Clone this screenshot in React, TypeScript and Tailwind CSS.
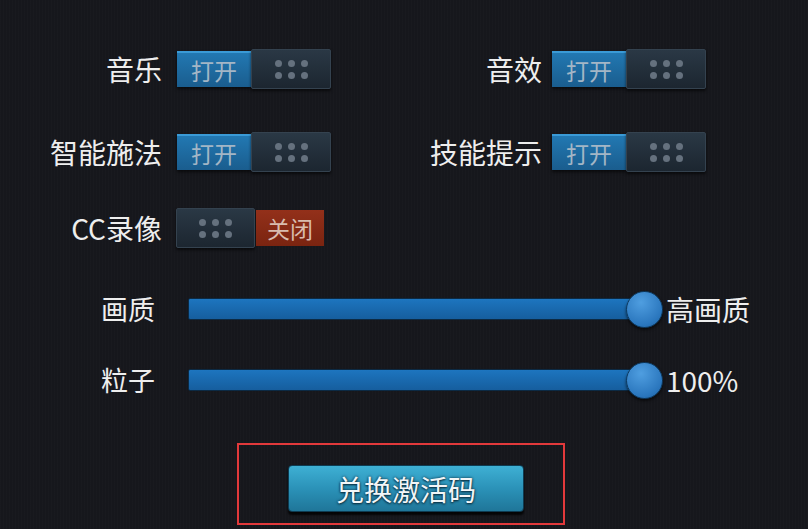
import React from "react";

const font = { fontFamily: '"Noto Sans CJK SC", "Noto Sans", sans-serif' };

function Dots() {
  return (
    <div className="grid grid-cols-3 gap-x-[6px] gap-y-[5px]">
      {[0, 1, 2, 3, 4, 5].map((i) => (
        <span key={i} className="block h-[7px] w-[7px] rounded-full bg-[#65717e]" />
      ))}
    </div>
  );
}

function Toggle({ on }: { on: boolean }) {
  if (on) {
    return (
      <div className="flex items-center">
        <div className="flex h-[36px] w-[74px] items-center justify-center border-t-2 border-[#3a9ad6] bg-gradient-to-b from-[#2278b2] to-[#1a5d8e] text-[23px] text-[#a3b6c6] shadow-[0_2px_3px_rgba(0,0,0,0.6)]">
          打开
        </div>
        <div className="flex h-[40px] w-[80px] items-center justify-center rounded-[2px] border border-[#34424f] bg-gradient-to-b from-[#2a3845] to-[#1c2630] shadow-[0_2px_3px_rgba(0,0,0,0.6)]">
          <Dots />
        </div>
      </div>
    );
  }
  return (
    <div className="flex items-center">
      <div className="flex h-[40px] w-[79px] items-center justify-center rounded-[2px] border border-[#34424f] bg-gradient-to-b from-[#2a3845] to-[#1c2630] shadow-[0_2px_3px_rgba(0,0,0,0.6)]">
        <Dots />
      </div>
      <div className="ml-px flex h-[36px] w-[68px] items-center justify-center bg-gradient-to-b from-[#93301a] to-[#7a2410] text-[23px] text-[#d9bcae]">
        关闭
      </div>
    </div>
  );
}

function Slider({ label, value }: { label: string; value: string }) {
  return (
    <div className="flex h-[40px] items-center">
      <div className="w-[155px] text-right text-[27px] text-[#eeeeee]">{label}</div>
      <div className="ml-[33px] flex items-center">
        <div className="h-[22px] w-[457px] rounded-[2px] border border-[#0c2a44] bg-gradient-to-b from-[#1d75bf] to-[#165e9e]" />
        <div className="-ml-[19px] h-[37px] w-[37px] rounded-full border border-[#0d3a60] bg-[radial-gradient(circle_at_40%_30%,#4f9ee0,#2a76bd_70%,#1d5c97)] shadow-[0_2px_3px_rgba(0,0,0,0.6)]" />
        <div className="ml-[3px] text-[28px] text-[#eeeeee]">{value}</div>
      </div>
    </div>
  );
}

export default function App() {
  return (
    <div
      className="h-[529px] w-[808px] overflow-hidden bg-[#16171c] bg-[repeating-linear-gradient(90deg,rgba(255,255,255,0.012)_0px,rgba(255,255,255,0.012)_1px,transparent_1px,transparent_3px)]"
      style={font}
    >
      <div className="flex flex-col pt-[49px]">
        <div className="flex h-[40px] items-center">
          <div className="w-[162px] text-right text-[28px] text-[#eeeeee]">音乐</div>
          <div className="ml-[15px]">
            <Toggle on />
          </div>
          <div className="ml-[69px] w-[142px] text-right text-[28px] text-[#eeeeee]">音效</div>
          <div className="ml-[10px]">
            <Toggle on />
          </div>
        </div>
        <div className="mt-[43px] flex h-[40px] items-center">
          <div className="w-[162px] text-right text-[28px] text-[#eeeeee]">智能施法</div>
          <div className="ml-[15px]">
            <Toggle on />
          </div>
          <div className="ml-[69px] w-[142px] text-right text-[28px] text-[#eeeeee]">技能提示</div>
          <div className="ml-[10px]">
            <Toggle on />
          </div>
        </div>
        <div className="mt-[36px] flex h-[40px] items-center">
          <div className="w-[162px] text-right text-[28px] text-[#eeeeee]">CC录像</div>
          <div className="ml-[14px]">
            <Toggle on={false} />
          </div>
        </div>
        <div className="mt-[41px]">
          <Slider label="画质" value="高画质" />
        </div>
        <div className="mt-[31px]">
          <Slider label="粒子" value="100%" />
        </div>
        <div className="ml-[237px] mt-[43px] flex h-[82px] w-[328px] items-start border-2 border-[#e2393b] pl-[49px] pt-[20px]">
          <div className="flex h-[47px] w-[236px] items-center justify-center rounded-[4px] border border-[#0e3c52] bg-gradient-to-b from-[#3eb0d4] via-[#2b92b8] to-[#1f7699] text-[28px] text-[#f2f6f8] shadow-[0_3px_2px_rgba(0,0,0,0.8)] [text-shadow:0_0_3px_#0b2f40,0_1px_2px_#0b2f40]">
            兑换激活码
          </div>
        </div>
      </div>
    </div>
  );
}
